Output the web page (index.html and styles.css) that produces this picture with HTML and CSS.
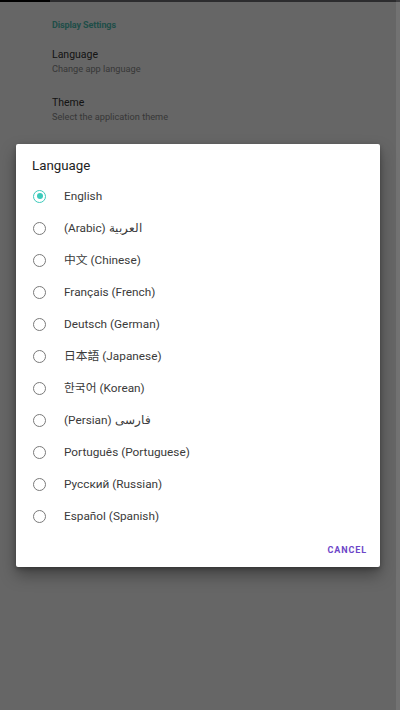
FILE: index.html
```html
<!DOCTYPE html>
<html>
<head>
<meta charset="utf-8">
<link rel="stylesheet" href="styles.css">
</head>
<body>
<div class="screen">
  <div class="topbar"><span class="topbar-black"></span></div>
  <div class="settings">
    <div class="section-title">Display Settings</div>
    <div class="pref">
      <div class="pref-title">Language</div>
      <div class="pref-sub">Change app language</div>
    </div>
    <div class="pref">
      <div class="pref-title">Theme</div>
      <div class="pref-sub">Select the application theme</div>
    </div>
  </div>
  <div class="scrim"></div>
  <div class="edge"></div>
  <div class="dialog">
    <div class="dialog-title">Language</div>
    <div class="options">
      <div class="option"><span class="radio checked"></span><span class="label">English</span></div>
      <div class="option"><span class="radio"></span><span class="label">(Arabic) العربية</span></div>
      <div class="option"><span class="radio"></span><span class="label">中文 (Chinese)</span></div>
      <div class="option"><span class="radio"></span><span class="label">Français (French)</span></div>
      <div class="option"><span class="radio"></span><span class="label">Deutsch (German)</span></div>
      <div class="option"><span class="radio"></span><span class="label">日本語 (Japanese)</span></div>
      <div class="option"><span class="radio"></span><span class="label">한국어 (Korean)</span></div>
      <div class="option"><span class="radio"></span><span class="label">(Persian) فارسی</span></div>
      <div class="option"><span class="radio"></span><span class="label">Português (Portuguese)</span></div>
      <div class="option"><span class="radio"></span><span class="label">Русский (Russian)</span></div>
      <div class="option"><span class="radio"></span><span class="label">Español (Spanish)</span></div>
    </div>
    <div class="actions"><span class="btn">CANCEL</span></div>
  </div>
</div>
</body>
</html>
```
FILE: styles.css
```css
html, body {
  margin: 0;
  padding: 0;
}
body {
  font-family: Roboto, "Noto Sans", "Noto Sans CJK SC", "Noto Sans CJK JP", "Noto Sans CJK KR", sans-serif;
  background: #ffffff;
}
.screen {
  position: relative;
  width: 400px;
  height: 710px;
  overflow: hidden;
  background: #ffffff;
}
.topbar {
  height: 2px;
  background: #6e6e74;
  display: flex;
}
.topbar-black {
  width: 50px;
  background: #000;
}
.settings {
  padding: 17px 0 0 52px;
}
.section-title {
  font-size: 9px;
  font-weight: 700;
  color: #4fc2b4;
  line-height: 12px;
  letter-spacing: -0.1px;
}
.pref {
  padding-top: 17px;
}
.pref + .pref {
  padding-top: 21px;
}
.pref-title {
  font-size: 10.5px;
  line-height: 14px;
  color: #333;
}
.pref-sub {
  font-size: 9.2px;
  line-height: 12px;
  margin-top: 1px;
  color: #8c8c8c;
}
.scrim {
  position: absolute;
  inset: 0;
  background: rgba(0, 0, 0, 0.6);
}
.edge {
  position: absolute;
  top: 0;
  right: 0;
  width: 4px;
  height: 710px;
  background: rgba(255, 255, 255, 0.08);
}
.dialog {
  position: absolute;
  top: 144px;
  left: 16px;
  width: 364px;
  height: 423px;
  background: #fff;
  border-radius: 2px;
  box-shadow: 0 8px 16px rgba(0, 0, 0, 0.35), 0 2px 4px rgba(0, 0, 0, 0.25);
  display: flex;
  flex-direction: column;
  box-sizing: border-box;
  padding-top: 13px;
}
.dialog-title {
  font-size: 13.3px;
  line-height: 18px;
  color: #222;
  padding-left: 16px;
  margin-bottom: 5px;
}
.options {
  display: flex;
  flex-direction: column;
}
.option {
  height: 32px;
  display: flex;
  align-items: center;
  padding-left: 17px;
}
.radio {
  width: 13px;
  height: 13px;
  box-sizing: border-box;
  border: 1.8px solid #7a7a7a;
  border-radius: 50%;
  margin-right: 18px;
  flex: none;
  display: flex;
  align-items: center;
  justify-content: center;
}
.radio.checked {
  border-color: #3ccabb;
}
.radio.checked::after {
  content: "";
  width: 6px;
  height: 6px;
  border-radius: 50%;
  background: #3ccabb;
}
.label {
  font-size: 11.8px;
  color: #3a3a3a;
  line-height: 14px;
}
.actions {
  flex: 1;
  display: flex;
  justify-content: flex-end;
  align-items: center;
  padding-right: 13px;
}
.btn {
  font-size: 9px;
  font-weight: 700;
  letter-spacing: 0.9px;
  color: #6d46c8;
}
```
